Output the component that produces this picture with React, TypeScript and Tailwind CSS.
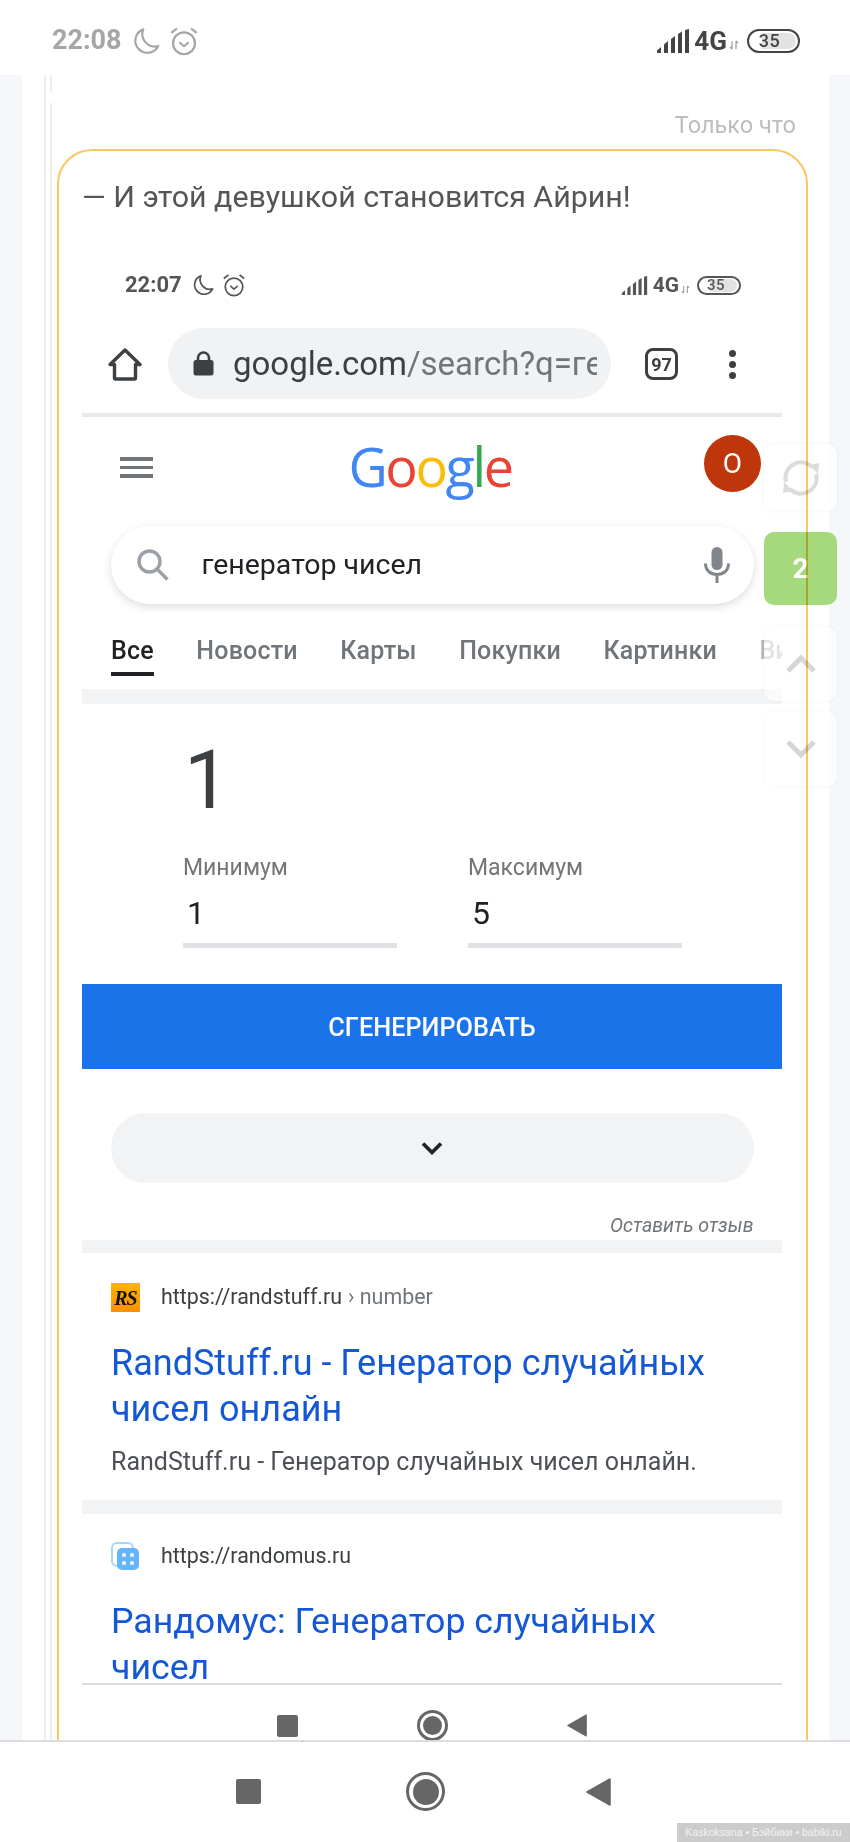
import React from 'react';

// Phone status bar bits, reused at two scales
function Moon({ className }: { className?: string }) {
  return (
    <svg viewBox="0 0 26 26" fill="none" className={className}>
      <path
        d="M10.5 2.2A11.2 11.2 0 1 0 24.4 17.6 11.5 11.5 0 0 1 10.5 2.2Z"
        stroke="currentColor"
        strokeWidth="2"
        strokeLinejoin="round"
      />
    </svg>
  );
}

function Alarm({ className }: { className?: string }) {
  return (
    <svg viewBox="0 0 26 26" fill="none" className={className} stroke="currentColor">
      <circle cx="13" cy="15" r="9.5" strokeWidth="1.9" />
      <path d="M9 14l4 3.5 4-3.5" strokeWidth="1.7" />
      <path d="M2 6l5-4M24 6l-5-4" strokeWidth="1.9" />
    </svg>
  );
}

function Signal({ className }: { className?: string }) {
  return (
    <svg viewBox="0 0 32 24" className={className} fill="currentColor">
      <path d="M0 24v-2.5L4 18v6Z" />
      <path d="M7 24v-8.5l4-3.5v12Z" />
      <path d="M14 24V10l4-3v17Z" />
      <path d="M21 24V5l4-2.5V24Z" />
      <path d="M28 24V1l4-1v24Z" />
    </svg>
  );
}

function UpDown({ className }: { className?: string }) {
  return (
    <svg viewBox="0 0 10 10" fill="none" stroke="currentColor" strokeWidth="1.2" className={className}>
      <path d="M3 1v8M1 7l2 2M7 9V1M7 1l2 2" />
    </svg>
  );
}

function NavIcons({ square, circle, inner, triangle }: { square: string; circle: string; inner: string; triangle: string }) {
  return (
    <>
      <div className={`${square} bg-[#666666] rounded-[2px]`} />
      <div className={`${circle} rounded-full border-[3px] border-[#666666] flex items-center justify-center`}>
        <div className={`${inner} rounded-full bg-[#666666]`} />
      </div>
      <svg viewBox="0 0 25 28" className={`${triangle} text-[#666666]`} fill="currentColor" stroke="currentColor" strokeWidth="1.5" strokeLinejoin="round">
        <path d="M1 14 24 1v26Z" />
      </svg>
    </>
  );
}

function SideButton({ className, children }: { className: string; children: React.ReactNode }) {
  return (
    <div className={`absolute left-[764px] w-[73px] rounded-[10px] flex items-center justify-center ${className}`}>
      {children}
    </div>
  );
}

function Tab({ label, active }: { label: string; active?: boolean }) {
  return (
    <div className="relative shrink-0 h-[63px] pt-[2px] flex items-center">
      <span className={`text-[25px] font-medium tracking-[0.2px] ${active ? 'text-[#202124]' : 'text-[#70757a]'}`}>{label}</span>
      {active && <div className="absolute left-0 right-0 bottom-[5px] h-[4px] bg-[#202124]" />}
    </div>
  );
}

export default function App() {
  return (
    <div className="relative w-[850px] h-[1842px] overflow-hidden flex flex-col bg-white font-['Roboto',sans-serif]">
      {/* outer status bar */}
      <div className="h-[75px] shrink-0 flex items-center justify-between pl-[52px] pr-[50px] pt-[6px] bg-white">
        <div className="flex items-center text-[#a6a6a6]">
          <span className="text-[27px] font-bold leading-none">22:08</span>
          <Moon className="w-[28px] h-[28px] ml-[10px]" />
          <Alarm className="w-[30px] h-[30px] ml-[9px]" />
        </div>
        <div className="flex items-center text-[#444444]">
          <Signal className="w-[32px] h-[24px]" />
          <span className="ml-[5px] text-[26px] font-bold leading-none">4G</span>
          <UpDown className="w-[10px] h-[10px] ml-[2px] mt-[9px] text-[#999999]" />
          <div className="relative ml-[8px] w-[53px] h-[24px] rounded-full border-[2.5px] border-[#444444] flex items-center justify-center overflow-hidden">
            <div className="absolute left-[13px] right-[2px] top-[2px] bottom-[2px] rounded-r-full bg-[#e2e2e2]" />
            <span className="relative text-[18px] font-medium leading-none tracking-[0.5px] pr-[8px]">35</span>
          </div>
        </div>
      </div>

      {/* page */}
      <div className="flex-1 min-h-0 bg-[#f5f7fb] pl-[22px] pr-[21px]">
        <div className="relative h-full bg-white pl-[22px] overflow-hidden">
          <div className="relative h-full border-l-[2px] border-[#eeeeee] pl-[4px]">
            <div className="relative h-full border-l-[2px] border-[#eeeeee]">
              <div className="absolute -left-[2px] top-[17px] w-[2px] h-[11px] bg-white" />
              <div className="h-[74px] flex items-end justify-end pr-[33px] pb-[11px]">
                <span className="text-[23.5px] leading-[26px] text-[#bdbdbd]">Только что</span>
              </div>

              {/* message card */}
              <div className="relative ml-[5px] w-[751px] h-[1700px] pl-[25px]">
                <div className="absolute inset-0 z-20 rounded-[35px] border-[2px] border-[#fcc566] mix-blend-multiply pointer-events-none" />
                <p className="pt-[28px] h-[111px] text-[30.4px] leading-[40px] text-[#555555]">— И этой девушкой становится Айрин!</p>

                {/* embedded screenshot */}
                <div className="w-[700px]">
                  {/* inner status bar */}
                  <div className="h-[50px] flex items-center justify-between pl-[43px] pr-[41px]">
                    <div className="flex items-center text-[#555555]">
                      <span className="text-[22px] font-bold leading-none">22:07</span>
                      <Moon className="w-[22px] h-[22px] ml-[10px]" />
                      <Alarm className="w-[24px] h-[24px] ml-[8px]" />
                    </div>
                    <div className="flex items-center text-[#555555]">
                      <Signal className="w-[27px] h-[19px]" />
                      <span className="ml-[5px] text-[21px] font-bold leading-none">4G</span>
                      <UpDown className="w-[9px] h-[9px] ml-[2px] mt-[8px] text-[#999999]" />
                      <div className="relative ml-[7px] w-[44px] h-[19px] rounded-full border-[2px] border-[#555555] flex items-center justify-center overflow-hidden">
                        <div className="absolute left-[11px] right-[2px] top-[1px] bottom-[1px] rounded-r-full bg-[#e2e2e2]" />
                        <span className="relative text-[15px] font-medium leading-none tracking-[0.5px] pr-[6px]">35</span>
                      </div>
                    </div>
                  </div>

                  {/* browser toolbar */}
                  <div className="h-[103px] pt-[18px] pl-[26px] flex items-start">
                    <svg viewBox="0 0 34 33" fill="none" stroke="#3c4043" strokeWidth="3.4" strokeLinejoin="round" className="w-[34px] h-[33px] mt-[20px] shrink-0">
                      <path d="M2 16.5 17 2l15 14.5h-4.5V30a1 1 0 0 1-1 1h-19a1 1 0 0 1-1-1V16.5Z" />
                    </svg>
                    <div className="ml-[26px] w-[443px] h-[71px] rounded-full bg-[#f0f2f4] flex items-center pl-[25px] shrink-0">
                      <svg viewBox="0 0 21 25" className="w-[21px] h-[25px] shrink-0" fill="none">
                        <path d="M5 10V7a5.5 5.5 0 0 1 11 0v3" stroke="#3c4043" strokeWidth="2.6" />
                        <rect x="0.5" y="9" width="20" height="15.5" rx="2.5" fill="#3c4043" />
                      </svg>
                      <div className="ml-[19px] w-[364px] overflow-hidden whitespace-nowrap text-[33px] leading-[40px] text-[#3c4043]">
                        google.com<span className="text-[#70757a]">/search?q=генератор</span>
                      </div>
                    </div>
                    <div className="ml-[34px] mt-[20px] w-[33px] h-[32px] rounded-[8px] border-[3.5px] border-[#3c4043] flex items-center justify-center text-[18px] font-bold text-[#3c4043] shrink-0">97</div>
                    <div className="ml-[51px] mt-[22px] flex flex-col gap-[4px] shrink-0">
                      <div className="w-[7px] h-[7px] rounded-full bg-[#3c4043]" />
                      <div className="w-[7px] h-[7px] rounded-full bg-[#3c4043]" />
                      <div className="w-[7px] h-[7px] rounded-full bg-[#3c4043]" />
                    </div>
                  </div>
                  <div className="h-[4px] bg-[#e8e9ea]" />

                  {/* google header */}
                  <div className="h-[109px] flex items-start justify-between pl-[38px] pr-[21px]">
                    <div className="mt-[40px] w-[33px] flex flex-col gap-[5px]">
                      <div className="h-[3.5px] bg-[#70757a]" />
                      <div className="h-[3.5px] bg-[#70757a]" />
                      <div className="h-[3.5px] bg-[#70757a]" />
                    </div>
                    <div className="mt-[17px] ml-[3px] text-[54px] leading-[64px] font-['Open_Sans',sans-serif] font-medium tracking-[-2.4px]">
                      <span className="text-[#4285f4]">G</span>
                      <span className="text-[#ea4335]">o</span>
                      <span className="text-[#fbbc05]">o</span>
                      <span className="text-[#4285f4]">g</span>
                      <span className="text-[#34a853]">l</span>
                      <span className="text-[#ea4335]">e</span>
                    </div>
                    <div className="mt-[18px] w-[57px] h-[57px] rounded-full bg-[#bf360c] flex items-center justify-center text-[28px] text-white">О</div>
                  </div>

                  {/* search box */}
                  <div className="mx-[28.5px] h-[78px] rounded-full bg-white shadow-[0_3px_8px_rgba(60,64,67,0.18)] flex items-center pl-[26px] pr-[24px]">
                    <svg viewBox="0 0 32 32" fill="none" stroke="#9aa0a6" strokeWidth="3.4" className="w-[32px] h-[32px] shrink-0">
                      <circle cx="12.5" cy="12.5" r="10.5" />
                      <path d="M20 20l10.5 10.5" />
                    </svg>
                    <span className="ml-[33px] flex-1 text-[28.5px] text-[#202124]">генератор чисел</span>
                    <svg viewBox="0 0 26 36" fill="none" className="w-[26px] h-[36px] shrink-0">
                      <rect x="7.5" y="0" width="11" height="23" rx="5.5" fill="#80868b" />
                      <path d="M1.5 16.5c0 7 5 11 11.5 11s11.5-4 11.5-11M13 27.5V36" stroke="#80868b" strokeWidth="3" />
                    </svg>
                  </div>

                  {/* search tabs */}
                  <div className="mt-[14px] h-[63px] overflow-hidden pl-[29px] flex gap-[42.5px]">
                    <Tab label="Все" active />
                    <Tab label="Новости" />
                    <Tab label="Карты" />
                    <Tab label="Покупки" />
                    <Tab label="Картинки" />
                    <div className="shrink-0 h-[63px] pt-[2px] flex items-center text-[25px] font-medium text-[#b5b7ba]">Видео</div>
                  </div>
                  <div className="mt-[8px] h-[15px] bg-[#f1f3f4]" />

                  {/* random number widget */}
                  <div className="h-[280px] pt-[28px]">
                    <div className="pl-[102px] text-[82px] leading-[96px] text-[#3c4043]">1</div>
                    <div className="mt-[27px] pl-[101px] flex gap-[71px]">
                      <div className="w-[214px]">
                        <div className="text-[23px] leading-[26px] text-[#757575]">Минимум</div>
                        <div className="mt-[12px] pl-[4px] text-[32px] leading-[40px] text-[#202124]">1</div>
                        <div className="mt-[10px] h-[5px] bg-[#dfe1e5]" />
                      </div>
                      <div className="w-[214px]">
                        <div className="text-[23px] leading-[26px] text-[#757575]">Максимум</div>
                        <div className="mt-[12px] pl-[4px] text-[32px] leading-[40px] text-[#202124]">5</div>
                        <div className="mt-[10px] h-[5px] bg-[#dfe1e5]" />
                      </div>
                    </div>
                  </div>
                  <div className="h-[85px] pt-[3px] bg-[#1a73e8] flex items-center justify-center text-[25.3px] font-medium text-white">СГЕНЕРИРОВАТЬ</div>

                  <div className="mt-[44px] mx-[28.5px] h-[70px] rounded-full bg-[#f1f3f4] flex items-center justify-center">
                    <svg viewBox="0 0 22 14" fill="none" stroke="#202124" strokeWidth="3.6" className="w-[22px] h-[14px]">
                      <path d="M2 2.5l9 9 9-9" />
                    </svg>
                  </div>
                  <div className="h-[57px] pt-[30px] pr-[28.5px] text-right text-[19.6px] leading-[26px] italic text-[#70757a]">Оставить отзыв</div>
                  <div className="h-[13px] bg-[#f1f3f4]" />

                  {/* results */}
                  <div className="h-[247px] pl-[29px] pt-[30px]">
                    <div className="flex items-center h-[29px]">
                      <div className="w-[29px] h-[29px] bg-gradient-to-b from-[#ffb300] to-[#ff8f00] flex items-center justify-center font-['Liberation_Serif',serif] italic font-bold text-[20px] tracking-[-1px] text-[#111111]">RS</div>
                      <span className="ml-[21px] text-[21.4px] text-[#3c4043]">https://randstuff.ru</span>
                      <span className="ml-[6px] text-[21.4px] text-[#70757a]">› number</span>
                    </div>
                    <div className="mt-[28px] text-[36px] leading-[46px] text-[#1558d6]">
                      RandStuff.ru - Генератор случайных
                      <br />
                      чисел онлайн
                    </div>
                    <div className="mt-[15px] text-[25px] leading-[30px] text-[#4d5156]">RandStuff.ru - Генератор случайных чисел онлайн.</div>
                  </div>
                  <div className="h-[14px] bg-[#f1f3f4]" />
                  <div className="h-[169px] overflow-hidden pl-[29px] pt-[28px]">
                    <div className="flex items-center h-[29px]">
                      <svg viewBox="0 0 29 29" className="w-[29px] h-[29px]">
                        <rect x="1" y="1" width="21" height="23" rx="5" fill="none" stroke="#a8d4fd" strokeWidth="2" />
                        <rect x="6" y="6" width="22" height="22" rx="5" fill="#64b5fb" />
                        <circle cx="13" cy="13" r="2" fill="#fff" />
                        <circle cx="21" cy="13" r="2" fill="#fff" />
                        <circle cx="13" cy="21" r="2" fill="#fff" />
                        <circle cx="21" cy="21" r="2" fill="#fff" />
                      </svg>
                      <span className="ml-[21px] text-[21.4px] text-[#3c4043]">https://randomus.ru</span>
                    </div>
                    <div className="mt-[27px] text-[35.7px] leading-[46px] text-[#1558d6]">
                      Рандомус: Генератор случайных
                      <br />
                      чисел
                    </div>
                  </div>
                  <div className="h-[2px] bg-[#dadce0]" />
                  <div className="h-[60px] flex items-start pt-[26px] pl-[195px]">
                    <div className="flex items-center gap-[119px] -mt-[1px]">
                      <NavIcons square="w-[21px] h-[22px]" circle="w-[31px] h-[31px]" inner="w-[19px] h-[19px]" triangle="w-[20px] h-[23px]" />
                    </div>
                  </div>
                </div>
              </div>
            </div>
          </div>
        </div>
      </div>

      {/* outer nav bar */}
      <div className="relative z-30 h-[102px] shrink-0 bg-white border-t-[2px] border-[#dadce0] flex items-start pt-[30px] pl-[236px]">
        <div className="flex items-center gap-[145px]">
          <NavIcons square="w-[25px] h-[25px]" circle="w-[39px] h-[39px]" inner="w-[26px] h-[26px]" triangle="-ml-[4px] w-[25px] h-[28px]" />
        </div>
      </div>

      {/* floating counters */}
      <SideButton className="z-10 top-[444px] h-[67px] bg-white/70 shadow-[0_0_4px_rgba(0,0,0,0.05)]">
        <svg viewBox="0 0 38 38" fill="none" className="w-[38px] h-[38px]">
          <path d="M4 23A15.5 15.5 0 0 1 30 8" stroke="#dcdcdc" strokeWidth="4" />
          <path d="M34 15A15.5 15.5 0 0 1 8 30" stroke="#dcdcdc" strokeWidth="4" />
          <path d="M27 6l10-2-1 11Z" fill="#dcdcdc" />
          <path d="M11 32 1 34l1-11Z" fill="#dcdcdc" />
        </svg>
      </SideButton>
      <SideButton className="z-10 top-[532px] h-[73px] bg-[#a5d97c] text-[28px] font-bold text-white">2</SideButton>
      <SideButton className="z-10 top-[627px] h-[74px] bg-white/60 shadow-[0_0_4px_rgba(0,0,0,0.04)]">
        <svg viewBox="0 0 30 18" fill="none" stroke="#d6d6d6" strokeWidth="5" className="w-[30px] h-[18px] -mt-[1px]">
          <path d="M2 16 15 3l13 13" />
        </svg>
      </SideButton>
      <SideButton className="z-10 top-[712px] h-[74px] bg-white/60 shadow-[0_0_4px_rgba(0,0,0,0.04)]">
        <svg viewBox="0 0 30 18" fill="none" stroke="#d6d6d6" strokeWidth="5" className="w-[30px] h-[18px] -mt-[1px]">
          <path d="M2 2l13 13L28 2" />
        </svg>
      </SideButton>

      {/* watermark */}
      <div className="absolute z-40 right-0 bottom-0 w-[173px] h-[19px] bg-[#cccccc] flex items-center justify-center font-['Liberation_Sans',sans-serif] text-[10.5px] text-[#f2f2f2] whitespace-nowrap">
        Kaskoksana • Бэйбики • babiki.ru
      </div>
    </div>
  );
}
